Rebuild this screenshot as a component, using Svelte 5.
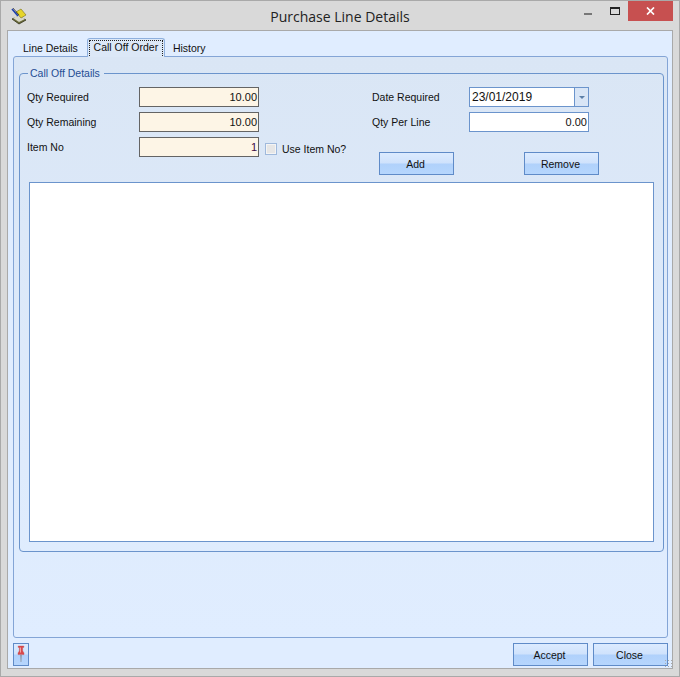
<script>
  let activeTab = $state('Call Off Order')
  const tabs = ['Line Details', 'Call Off Order', 'History']
</script>

<div class="window">
  <header class="titlebar">
    <svg class="app-icon" width="18" height="18" viewBox="0 0 18 18">
      <path d="M2 12 L9 9 L16 13 L9 17 Z" fill="#6b6b3a" stroke="#33331a" stroke-width="0.8" />
      <path d="M3 11 L9 8 L15 12 L9 15 Z" fill="#d8d8c8" />
      <path d="M6 5 L11 2 L16 8 L11 11 Z" fill="#e6d52a" stroke="#77701a" stroke-width="0.6" />
      <path d="M2 2 L8 9" stroke="#1c3fae" stroke-width="1.6" />
      <path d="M3 1 L9 8" stroke="#222" stroke-width="0.7" />
    </svg>
    <span class="title">Purchase Line Details</span>
    <div class="controls">
      <span class="minimize"></span>
      <span class="maximize"></span>
      <span class="close">
        <svg width="9" height="8" viewBox="0 0 9 8">
          <path d="M1 0.5 L8 7.5 M8 0.5 L1 7.5" stroke="#fff" stroke-width="1.7" />
        </svg>
      </span>
    </div>
  </header>

  <main class="client">
    <nav class="tabs">
      {#each tabs as tab}
        <button class="tab" class:active={activeTab === tab} onclick={() => (activeTab = tab)}>
          <span>{tab}</span>
        </button>
      {/each}
    </nav>

    <section class="panel">
      <fieldset class="group">
        <legend>Call Off Details</legend>

        <div class="form">
          <div class="col left">
            <div class="row">
              <span class="label">Qty Required</span>
              <div class="input cream">10.00</div>
            </div>
            <div class="row">
              <span class="label">Qty Remaining</span>
              <div class="input cream">10.00</div>
            </div>
            <div class="row">
              <span class="label">Item No</span>
              <div class="input cream item">1</div>
              <label class="check">
                <span class="box"></span>
                <span>Use Item No?</span>
              </label>
            </div>
          </div>

          <div class="col right">
            <div class="row">
              <span class="label">Date Required</span>
              <div class="date">
                <span>23/01/2019</span>
                <span class="drop">
                  <svg width="6" height="3" viewBox="0 0 6 3"><path d="M0 0 H6 L3 3 Z" fill="#5b7fa8" /></svg>
                </span>
              </div>
            </div>
            <div class="row">
              <span class="label">Qty Per Line</span>
              <div class="input">0.00</div>
            </div>
            <div class="actions">
              <button class="btn">Add</button>
              <button class="btn">Remove</button>
            </div>
          </div>
        </div>

        <div class="list"></div>
      </fieldset>
    </section>

    <footer class="footer">
      <button class="btn pin" aria-label="Pin">
        <svg width="10" height="19" viewBox="0 0 10 19">
          <path d="M4.2 10 H5.8 L5.4 17 H4.6 Z" fill="#8d96a3" />
          <path d="M2.2 1 H7.8 V2.4 H6.6 L6.7 6 L8 8 V9.6 H2 V8 L3.3 6 L3.4 2.4 H2.2 Z" fill="#d9484a" stroke="#c04a4c" stroke-width="0.4" />
          <rect x="4" y="2.5" width="1" height="5" fill="#f1a3a3" />
        </svg>
      </button>
      <div class="footer-actions">
        <button class="btn">Accept</button>
        <button class="btn">Close</button>
      </div>
      <span class="grip"></span>
    </footer>
  </main>
</div>

<style>
  :global(body) {
    margin: 0;
    background: #d9d9d9;
  }

  .window {
    box-sizing: border-box;
    width: 680px;
    height: 677px;
    display: flex;
    flex-direction: column;
    background: #d9d9d9;
    border: 1px solid #a9a9a9;
    font-family: "Liberation Sans", sans-serif;
    font-size: 10.5px;
    color: #111;
  }

  .titlebar {
    height: 29px;
    flex: none;
    display: grid;
    grid-template-columns: 1fr auto 1fr;
    align-items: start;
  }

  .app-icon {
    margin: 6px 0 0 9px;
  }

  .title {
    margin-top: 7px;
    font-family: "Open Sans", sans-serif;
    font-size: 14px;
    line-height: 18px;
    color: #222;
  }

  .controls {
    display: flex;
    align-items: flex-start;
    justify-content: flex-end;
    margin-right: 6px;
  }

  .minimize {
    width: 8px;
    height: 2px;
    margin-top: 12px;
    background: #777;
  }

  .maximize {
    box-sizing: border-box;
    width: 10px;
    height: 8px;
    margin: 6px 8px 0 18px;
    border: 1px solid #222;
    border-top-width: 2px;
  }

  .close {
    width: 45px;
    height: 20px;
    display: flex;
    align-items: center;
    justify-content: center;
    background: #c75050;
  }

  .client {
    flex: 1;
    display: flex;
    flex-direction: column;
    margin: 0 6px 7px;
    padding: 7px 4px 2px 5px;
    background: #e0edff;
    border: 1px solid #a9a9a9;
    position: relative;
  }

  .tabs {
    display: flex;
    height: 18px;
    padding-left: 2px;
    position: relative;
    z-index: 1;
  }

  .tab {
    box-sizing: border-box;
    height: 18px;
    padding: 0 8px 0 7px;
    border: 1px solid transparent;
    border-bottom: 0;
    background: none;
    font: inherit;
    color: inherit;
    line-height: 14px;
  }

  .tab.active {
    width: 78px;
    height: 19px;
    padding: 1px;
    background: #dce8f7;
    border-color: #8eb0de;
    border-radius: 3px 3px 0 0;
  }

  .tab.active span {
    display: block;
    height: 16px;
    box-sizing: border-box;
    border: 1px dotted #222;
    border-bottom: 0;
    line-height: 13px;
    white-space: nowrap;
  }

  .panel {
    box-sizing: border-box;
    height: 582px;
    flex: none;
    padding: 16px 3px 0 5px;
    border: 1px solid #84a5d6;
    border-radius: 3px;
    background: linear-gradient(#dae6f5, #e0edff);
  }

  .group {
    box-sizing: border-box;
    height: 486px;
    min-width: 0;
    margin: -7px 0 0;
    padding: 0 9px 9px;
    border: 1px solid #6b94cc;
    border-radius: 4px;
  }

  legend {
    margin-left: -1px;
    padding: 0 4px 0 2px;
    color: #1f4d94;
    line-height: 14px;
  }

  .form {
    display: flex;
    height: 102px;
    padding-top: 7px;
    box-sizing: border-box;
  }

  .col {
    display: flex;
    flex-direction: column;
    gap: 5px;
  }

  .left {
    width: 343px;
  }

  .row {
    display: flex;
    align-items: center;
    height: 20px;
  }

  .label {
    flex: none;
    width: 112px;
    margin-left: -2px;
    padding-bottom: 1px;
  }

  .right .label {
    width: 97px;
    margin-left: 0;
  }

  .input {
    box-sizing: border-box;
    width: 120px;
    height: 20px;
    padding: 2px 1px 0 3px;
    background: #fff;
    border: 1px solid #6b94cc;
    text-align: right;
    font-size: 11px;
    line-height: 15px;
  }

  .cream {
    background: #fdf5e6;
    border-color: #646464;
  }

  .item {
    color: #3c0a45;
  }

  .check {
    display: flex;
    align-items: center;
    gap: 5px;
    margin: 4px 0 0 6px;
    white-space: nowrap;
  }

  .box {
    box-sizing: border-box;
    width: 12px;
    height: 12px;
    border: 1px solid #9fb9dc;
    background: #e6e6e6;
    box-shadow: inset 0 0 0 1px #f4f4f4;
  }

  .date {
    box-sizing: border-box;
    width: 120px;
    height: 20px;
    display: flex;
    align-items: center;
    justify-content: space-between;
    padding-left: 2px;
    background: #fff;
    border: 1px solid #6b94cc;
    font-size: 12px;
  }

  .drop {
    align-self: stretch;
    width: 13px;
    display: flex;
    align-items: center;
    justify-content: center;
    border-left: 1px solid #6b94cc;
    background: #d8e5f6;
  }

  .actions {
    display: flex;
    justify-content: space-between;
    width: 220px;
    margin: 15px 0 0 7px;
  }

  .btn {
    box-sizing: border-box;
    width: 75px;
    height: 23px;
    padding: 0 2px 0 0;
    border: 1px solid #5f8bc8;
    background: linear-gradient(#dcebff 0%, #cfe2fc 48%, #b0d1fb 52%, #b6d6fd 100%);
    font: inherit;
    color: inherit;
  }

  .list {
    box-sizing: border-box;
    height: 360px;
    background: #fff;
    border: 1px solid #6b94cc;
  }

  .footer {
    display: flex;
    justify-content: space-between;
    margin-top: 5px;
    height: 23px;
  }

  .footer-actions {
    display: flex;
    gap: 5px;
  }

  .pin {
    width: 16px;
    display: flex;
    align-items: center;
    justify-content: center;
    padding: 0;
  }

  .grip {
    position: absolute;
    right: 0;
    bottom: 1px;
    width: 8px;
    height: 8px;
    background-image: radial-gradient(#a9a9a9 1px, transparent 1px);
    background-size: 3px 3px;
  }
</style>
